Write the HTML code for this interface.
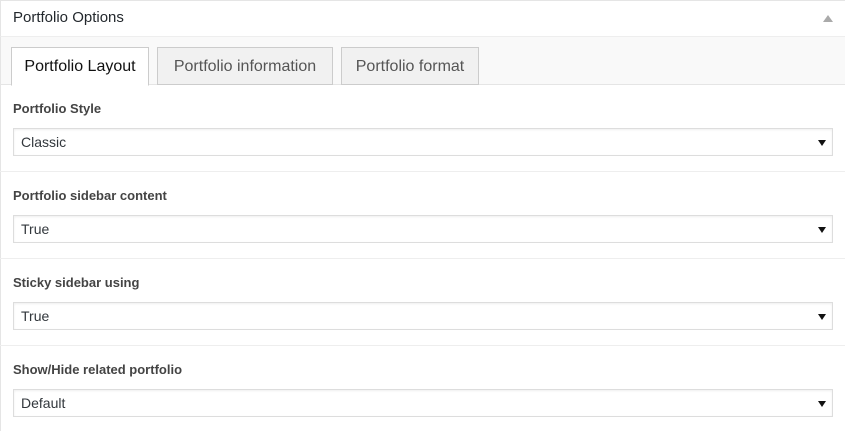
<!DOCTYPE html>
<html><head><style>
*{margin:0;padding:0;box-sizing:border-box}
body{width:845px;height:431px;background:#fff;font-family:"Liberation Sans",sans-serif;position:relative;overflow:hidden;color:#444}
.abs{position:absolute}
.hdr{left:0;top:0;width:845px;height:37px;border-top:1px solid #e5e5e5;border-left:1px solid #e5e5e5;border-bottom:1px solid #eee}
.title{left:13px;top:9px;font-size:15px;color:#23282d}
.up{left:823px;top:15px;width:0;height:0;border-left:5px solid transparent;border-right:5px solid transparent;border-bottom:7px solid #aaa}
.tabbar{left:1px;top:37px;width:844px;height:48px;background:#f9f9f9;border-bottom:1px solid #e5e5e5}
.tab{top:47px;height:38px;border:1px solid #ccc;background:#f1f1f1;font-size:16px;color:#555;text-align:center;line-height:37px}
.tab.on{background:#fff;color:#111;border-bottom:1px solid #fff;height:39px}
.lb{left:13px;font-size:13px;font-weight:bold;color:#444}
.sel{left:13px;width:820px;height:28px;border:1px solid #ddd;box-shadow:inset 0 1px 2px rgba(0,0,0,.07);font-size:14px;color:#32373c;padding-left:7px;line-height:26px}
.sel i{position:absolute;right:6px;top:11px;width:0;height:0;border-left:4px solid transparent;border-right:4px solid transparent;border-top:6px solid #111}
.sep{left:0;width:845px;height:1px;background:#eee}
.lborder{left:0;top:37px;width:1px;height:394px;background:#e5e5e5}
</style></head><body>
<div class="abs hdr"></div>
<div class="abs title">Portfolio Options</div>
<div class="abs up"></div>
<div class="abs tabbar"></div>
<div class="abs lborder"></div>
<div class="abs tab on" style="left:11px;width:138px">Portfolio Layout</div>
<div class="abs tab" style="left:157px;width:176px">Portfolio information</div>
<div class="abs tab" style="left:341px;width:138px">Portfolio format</div>

<div class="abs lb" style="top:101px">Portfolio Style</div>
<div class="abs sel" style="top:128px">Classic<i></i></div>
<div class="abs sep" style="top:171px"></div>
<div class="abs lb" style="top:188px">Portfolio sidebar content</div>
<div class="abs sel" style="top:215px">True<i></i></div>
<div class="abs sep" style="top:258px"></div>
<div class="abs lb" style="top:275px">Sticky sidebar using</div>
<div class="abs sel" style="top:302px">True<i></i></div>
<div class="abs sep" style="top:345px"></div>
<div class="abs lb" style="top:362px">Show/Hide related portfolio</div>
<div class="abs sel" style="top:389px">Default<i></i></div>
</body></html>
